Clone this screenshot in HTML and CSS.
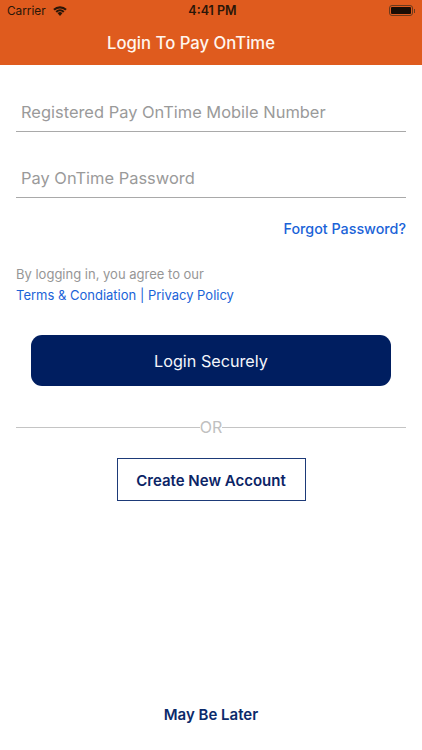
FILE: index.html
```html
<!DOCTYPE html>
<html lang="en">
<head>
<meta charset="utf-8">
<title>Login To Pay OnTime</title>
<link rel="stylesheet" href="styles.css">
</head>
<body>
<div class="screen">
  <header class="topbar">
    <div class="status">
      <div class="status-left">
        <span>Carrier</span>
        <svg class="wifi" width="14" height="10" viewBox="0 0 14 10"><path d="M7 10 4.6 7.3a3.4 3.4 0 0 1 4.8 0Z" fill="#2a1608"/><path d="M2.5 5.2a6.4 6.4 0 0 1 9 0L10 6.8a4.3 4.3 0 0 0-6 0Z" fill="#2a1608"/><path d="M.2 2.9a9.8 9.8 0 0 1 13.6 0l-1.6 1.7a7.4 7.4 0 0 0-10.4 0Z" fill="#2a1608"/></svg>
      </div>
      <div class="status-time">4:41 PM</div>
      <div class="status-right">
        <span class="battery"><span class="battery-fill"></span></span><span class="battery-tip"></span>
      </div>
    </div>
    <h1 class="title">Login To Pay OnTime</h1>
  </header>
  <main class="content">
    <div class="field first"><span class="placeholder">Registered Pay OnTime Mobile Number</span></div>
    <div class="field second"><span class="placeholder">Pay OnTime Password</span></div>
    <div class="forgot-row"><a class="forgot">Forgot Password?</a></div>
    <p class="agree">By logging in, you agree to our</p>
    <p class="terms">Terms &amp; Condiation | Privacy Policy</p>
    <button class="login">Login Securely</button>
    <div class="divider"><span class="line"></span><span class="or">OR</span><span class="line"></span></div>
    <div class="create-row"><button class="create">Create New Account</button></div>
    <div class="spacer"></div>
    <div class="later">May Be Later</div>
  </main>
</div>
</body>
</html>
```
FILE: styles.css
```css
* { box-sizing: border-box; }
html, body { margin: 0; padding: 0; background: #fff; }
body { font-family: Inter, "Liberation Sans", sans-serif; }
.screen { width: 422px; height: 750px; display: flex; flex-direction: column; overflow: hidden; }
.topbar { height: 65px; background: #df5b1e; flex: none; }
.status { height: 21px; display: grid; grid-template-columns: 1fr auto 1fr; align-items: center; padding: 0 7px; color: #2a1608; font-size: 11.8px; }
.status-left { display: flex; align-items: center; gap: 7px; }
.status-time { font-weight: 600; font-size: 12.5px; margin-left: 3px; }
.status-right { display: flex; justify-content: flex-end; align-items: center; }
.battery { width: 24px; height: 11px; border: 1px solid #6b3a1c; border-radius: 3px; padding: 1px; display: block; }
.battery-fill { display: block; width: 100%; height: 100%; background: #1a0d05; border-radius: 1px; }
.battery-tip { width: 1px; height: 4px; background: #6b3a1c; margin-left: 1px; }
.title { margin: 0; height: 44px; line-height: 44px; padding-right: 40px; text-align: center; color: #fff6ee; font-size: 16.7px; font-weight: 500; }
.content { flex: 1; display: flex; flex-direction: column; padding: 0 16px; }
.field { height: 44px; border-bottom: 1px solid #a9a9a9; display: flex; align-items: center; padding: 4px 0 0 5px; }
.first { margin-top: 23px; }
.second { margin-top: 22px; }
.placeholder { color: #9a9a9a; font-size: 16.45px; }
.forgot-row { margin-top: 21px; display: flex; justify-content: flex-end; line-height: 20px; }
.forgot { color: #1a63d8; font-size: 14.3px; font-weight: 500; }
.agree { margin: 25px 0 0; font-size: 13px; line-height: 20px; color: #969696; }
.terms { margin: 1px 0 0; font-size: 13px; line-height: 20px; color: #1a63d8; }
.login { margin: 30px 15px 0; height: 51px; border: 0; border-radius: 11px; background: #001e60; color: #f4f6fb; font-family: inherit; font-size: 16.2px; }
.divider { margin-top: 33px; height: 16px; display: flex; align-items: center; }
.line { flex: 1; height: 1px; background: #c4c4c4; }
.or { color: #c0c0c0; font-size: 16px; line-height: 16px; }
.create-row { margin-top: 23px; display: flex; justify-content: center; }
.create { width: 189px; height: 43px; padding: 1px 0 0; background: #fff; border: 1px solid #1d3a78; color: #0b2466; font-family: inherit; font-size: 15px; font-weight: 600; }
.spacer { flex: 1; }
.later { text-align: center; color: #0b2a6b; font-size: 15px; font-weight: 600; line-height: 20px; margin-bottom: 25px; }
```
